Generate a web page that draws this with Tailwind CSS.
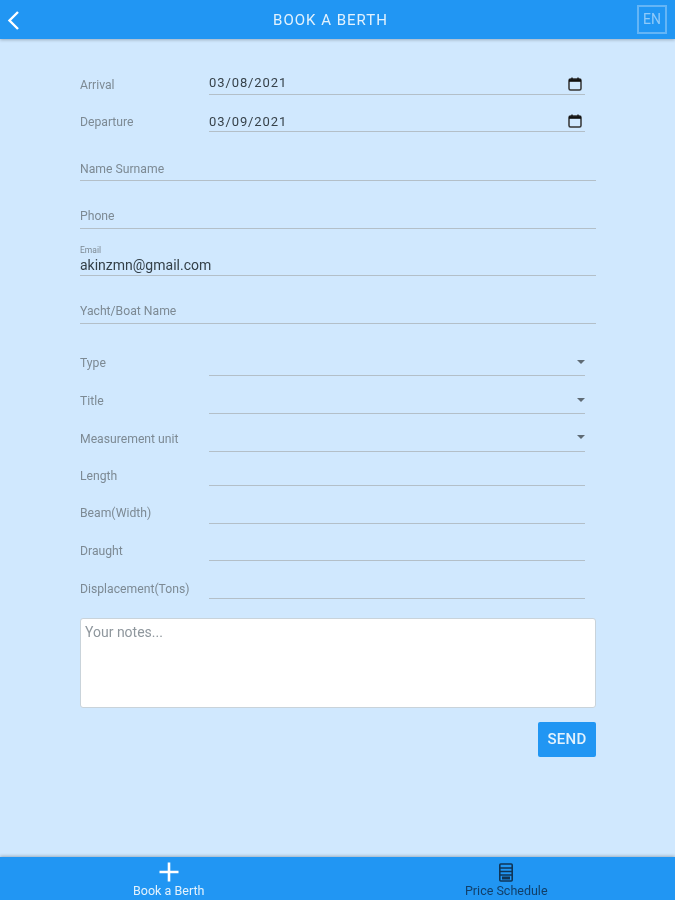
<!DOCTYPE html>
<html lang="en"><head><meta charset="utf-8"><title>Book a Berth</title>
<script src="https://cdn.jsdelivr.net/npm/@tailwindcss/browser@4"></script></head>
<body>
<div class="w-[675px] h-[900px] overflow-hidden flex flex-col bg-[#d0e8fe] font-['Roboto',sans-serif] blur-[0.5px]">
  <header class="relative z-10 h-[39px] shrink-0 bg-[#2196f3] shadow-[0_1px_3px_rgba(0,0,0,0.25)] flex items-center justify-between pl-[6px] pr-[8px]">
    <svg width="14" height="20" viewBox="0 0 14 20" fill="none" stroke="#fff" stroke-width="2.4" class="mt-[1px]"><path d="M12 2 3.500 10.500 12 19"/></svg>
    <h1 class="absolute left-0 w-[661px] text-center text-[15px] tracking-[1px] text-[#e3f2fd] leading-[40px]">BOOK A BERTH</h1>
    <div class="w-[30px] h-[29px] mb-[1px] border-2 border-[#64b5f6] flex items-center justify-center text-[14px] text-[#90caf9]">EN</div>
  </header>

  <main class="flex-1 pl-[80px] w-[596px] box-content text-[12.200px] text-[#7d8a94]">
    <div class="h-[56px] flex items-end">
      <span class="w-[129px] pb-[1px]">Arrival</span>
      <div class="w-[376px] h-[22px] border-b border-[#b3bfc8] flex items-center justify-between pr-[2px] pb-[2px] text-[13px] tracking-[0.9px] text-[#37424a]">03/08/2021
        <svg width="16" height="16" viewBox="0 0 16 16" fill="none" class="mt-[2px]"><rect x="2" y="3" width="12" height="11" rx="1.500" stroke="#333" stroke-width="1.500"/><path d="M2 3.200h12v2.600H2z" fill="#111"/><path d="M5 1.500v2M11 1.500v2" stroke="#111" stroke-width="1.300"/></svg>
      </div>
    </div>
    <div class="h-[37px] flex items-end">
      <span class="w-[129px] pb-[1px]">Departure</span>
      <div class="w-[376px] h-[20px] border-b border-[#b3bfc8] flex items-center justify-between pr-[2px] text-[13px] tracking-[0.9px] text-[#37424a]">03/09/2021
        <svg width="16" height="16" viewBox="0 0 16 16" fill="none" class="mb-[2px]"><rect x="2" y="3" width="12" height="11" rx="1.500" stroke="#333" stroke-width="1.500"/><path d="M2 3.200h12v2.600H2z" fill="#111"/><path d="M5 1.500v2M11 1.500v2" stroke="#111" stroke-width="1.300"/></svg>
      </div>
    </div>

    <div class="h-[49px] w-[516px] border-b border-[#b3bfc8] flex items-end pb-[2px]">Name Surname</div>
    <div class="h-[48px] w-[516px] border-b border-[#b3bfc8] flex items-end pb-[3px]">Phone</div>
    <div class="h-[47px] w-[516px] border-b border-[#b3bfc8] flex flex-col justify-end pb-[1px]">
      <span class="text-[8.500px] leading-[10px] mb-[1px]">Email</span>
      <span class="text-[14px] leading-[18px] text-[#333f47]">akinzmn@gmail.com</span>
    </div>
    <div class="h-[48px] w-[516px] border-b border-[#b3bfc8] flex items-end pb-[3px]">Yacht/Boat Name</div>

    <div class="h-[52px] flex items-end">
      <span class="w-[129px] pb-[4px]">Type</span>
      <div class="relative w-[376px] h-[24px] border-b border-[#b3bfc8]"><span class="absolute right-0 top-[8px] border-x-[4px] border-t-[4px] border-x-transparent border-t-[#5f6b75]"></span></div>
    </div>
    <div class="h-[38px] flex items-end">
      <span class="w-[129px] pb-[4px]">Title</span>
      <div class="relative w-[376px] h-[24px] border-b border-[#b3bfc8]"><span class="absolute right-0 top-[8px] border-x-[4px] border-t-[4px] border-x-transparent border-t-[#5f6b75]"></span></div>
    </div>
    <div class="h-[38px] flex items-end">
      <span class="w-[129px] pb-[4px]">Measurement unit</span>
      <div class="relative w-[376px] h-[24px] border-b border-[#b3bfc8]"><span class="absolute right-0 top-[7px] border-x-[4px] border-t-[4px] border-x-transparent border-t-[#5f6b75]"></span></div>
    </div>
    <div class="h-[34px] flex items-end"><span class="w-[129px] pb-[1px]">Length</span><div class="w-[376px] h-[20px] border-b border-[#b3bfc8]"></div></div>
    <div class="h-[38px] flex items-end"><span class="w-[129px] pb-[2px]">Beam(Width)</span><div class="w-[376px] h-[20px] border-b border-[#b3bfc8]"></div></div>
    <div class="h-[37px] flex items-end"><span class="w-[129px] pb-[1px]">Draught</span><div class="w-[376px] h-[20px] border-b border-[#b3bfc8]"></div></div>
    <div class="h-[38px] flex items-end"><span class="w-[129px] pb-[1px]">Displacement(Tons)</span><div class="w-[376px] h-[20px] border-b border-[#b3bfc8]"></div></div>

    <div class="mt-[19px] w-[516px] h-[90px] bg-white border border-[#c9d3da] rounded-[3px] px-[4px] py-[3px] text-[14px] text-[#8f979d]">Your notes...</div>
    <div class="w-[516px] flex justify-end mt-[14px]">
      <button class="w-[58px] h-[35px] bg-[#2196f3] rounded-[2px] text-[15px] tracking-[0.3px] font-medium text-[#e3f2fd]">SEND</button>
    </div>
  </main>

  <footer class="h-[43px] shrink-0 bg-[#2196f3] shadow-[0_-1px_3px_rgba(0,0,0,0.25)] grid grid-cols-2 text-[12.500px]">
    <div class="flex flex-col items-center text-[#e3f2fd]">
      <svg width="22" height="22" viewBox="0 0 22 22" class="mt-[4px]"><path d="M11 1.500v19M1.500 11h19" stroke="#fff" stroke-width="2.600"/></svg>
      <span class="leading-[13px] mt-[1px]">Book a Berth</span>
    </div>
    <div class="flex flex-col items-center text-[#123f68]">
      <svg width="18" height="20" viewBox="0 0 18 20" fill="none" class="mt-[6px]"><rect x="2.800" y="1" width="12.400" height="17" rx="1" stroke="#0f3557" stroke-width="1.600"/><path d="M3 5h12M3 8.500h12M3 12h12" stroke="#0f3557" stroke-width="1.500"/><path d="M5 13.500h8v3H5z" fill="#0f3557"/></svg>
      <span class="leading-[13px] mt-[1px]">Price Schedule</span>
    </div>
  </footer>
</div>
</body></html>
